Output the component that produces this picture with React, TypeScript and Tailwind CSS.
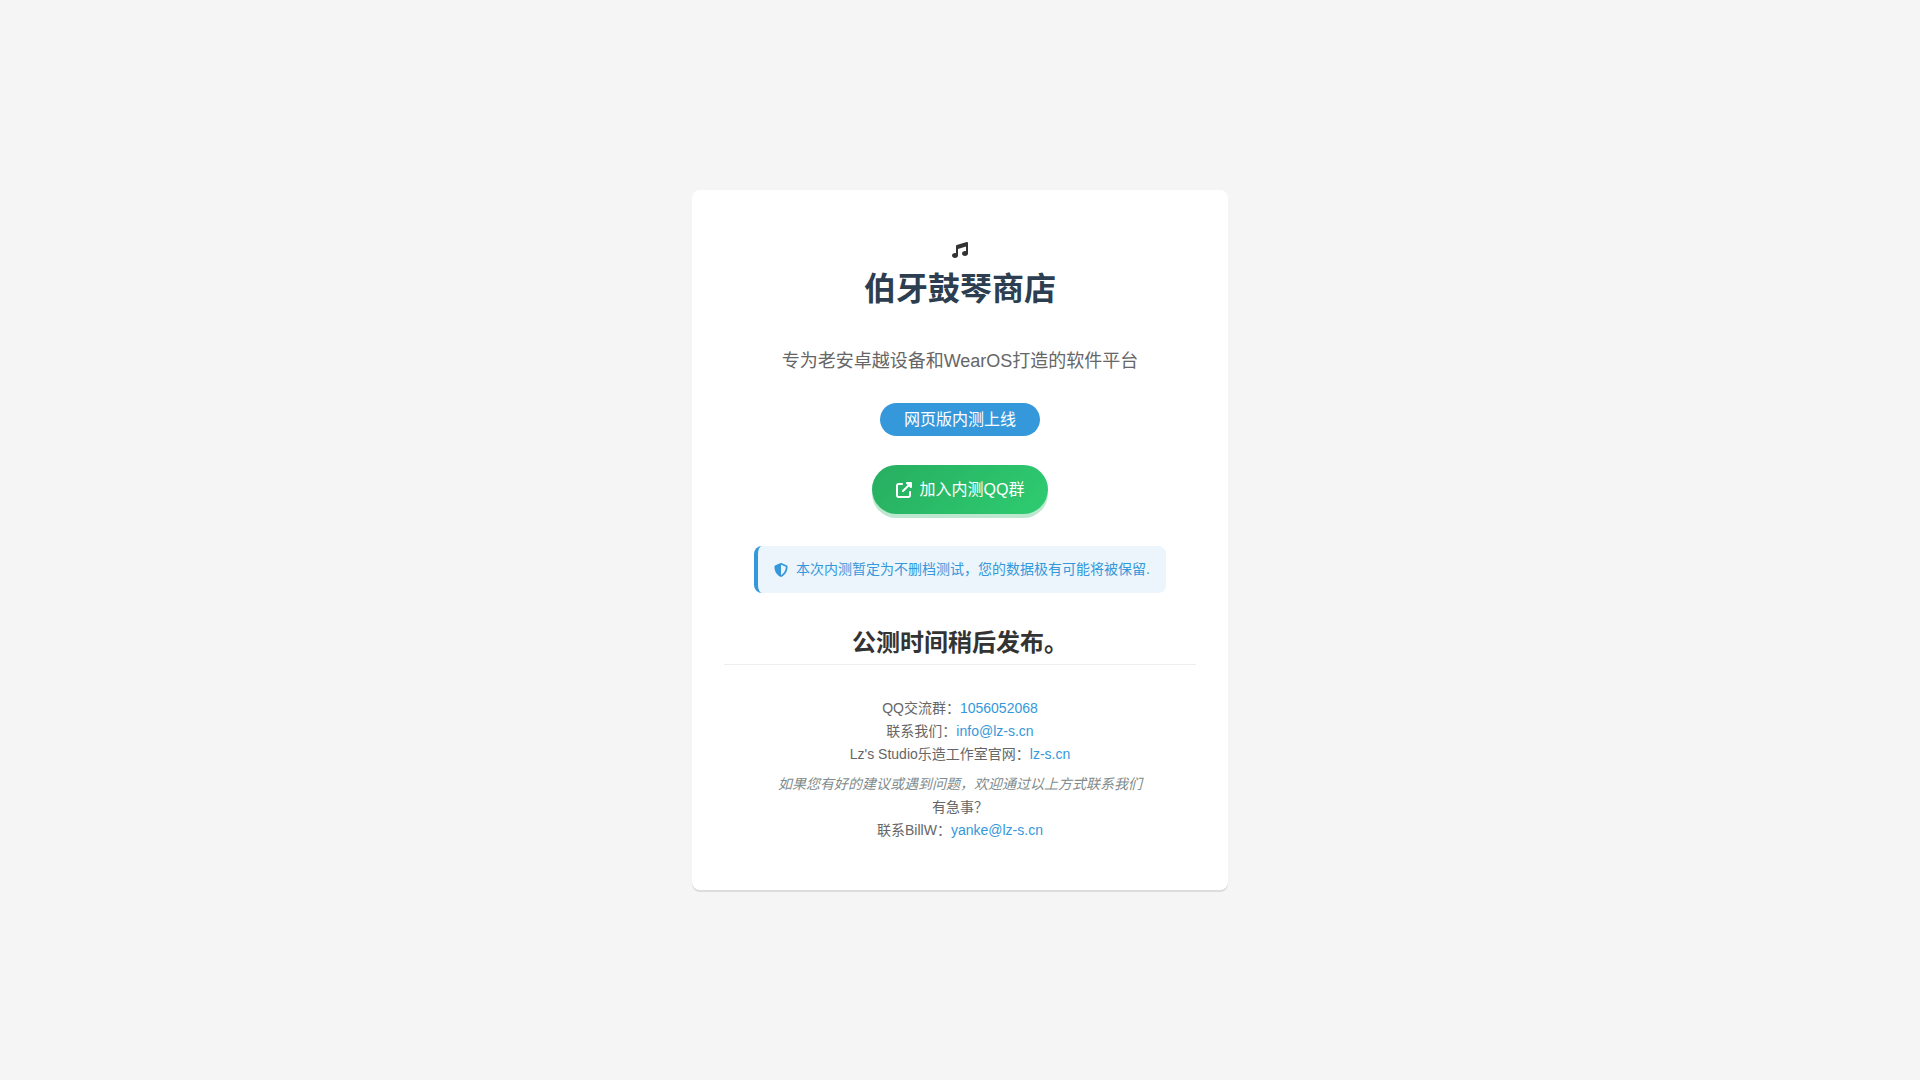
import { ReactNode } from 'react';
import { FaMusic, FaShieldHalved, FaUpRightFromSquare } from 'react-icons/fa6';

type TextLinkProps = {
  href: string;
  children: ReactNode;
};

const TextLink = ({ href, children }: TextLinkProps) => (
  <a className="text-[#3498db] hover:underline" href={href}>{children}</a>
);

const Notice = ({ children }: { children: ReactNode }) => (
  <div className="flex items-center gap-2 mx-[30px] mt-8 px-4 py-3 rounded-lg border-l-4 border-[#3498db] bg-[#ebf5fb] text-sm leading-[23px] text-[#3498db]">
    <FaShieldHalved className="size-3.5 shrink-0" />
    <span>{children}</span>
  </div>
);

export default function App() {
  return (
    <div className="flex min-h-screen items-center justify-center bg-[#f5f5f5] text-[#333] font-['Liberation_Sans','Noto_Sans_CJK_SC',sans-serif]">
      <main className="flex flex-col items-center px-8 py-12 rounded-lg bg-white text-center shadow-[0_2px_0_rgba(0,0,0,0.1)]">
        <FaMusic className="size-4 mt-1 mb-[5px]" />
        <h1 className="text-[32px] leading-[52px] font-bold text-[#2c3e50]">伯牙鼓琴商店</h1>
        <p className="mt-8 text-lg leading-7 text-[#666]">专为老安卓越设备和WearOS打造的软件平台</p>

        <span className="mt-7 px-6 py-1 rounded-full bg-[#3498db] leading-[25px] text-white">网页版内测上线</span>

        <a
          className="inline-flex items-center gap-2 mt-[29px] px-6 py-3 rounded-full bg-linear-135 from-[#27ae60] to-[#2ecc71] leading-[25px] text-white shadow-[0_4px_0_rgba(39,174,96,0.3)]"
          href="#join"
        >
          <FaUpRightFromSquare className="size-4" /> 加入内测QQ群
        </a>

        <Notice>本次内测暂定为不删档测试，您的数据极有可能将被保留.</Notice>

        <h2 className="w-full mt-8 pb-[3px] border-b border-[#eee] text-2xl leading-9 font-bold">公测时间稍后发布。</h2>

        <footer className="mt-8 text-sm leading-[23px] text-[#666]">
          <p>QQ交流群：<TextLink href="#group">1056052068</TextLink></p>
          <p>联系我们：<TextLink href="mailto:info@lz-s.cn">info@lz-s.cn</TextLink></p>
          <p>Lz's Studio乐造工作室官网：<TextLink href="https://lz-s.cn">lz-s.cn</TextLink></p>
          <p className="mt-[7px] italic text-[#7f8c8d]">如果您有好的建议或遇到问题，欢迎通过以上方式联系我们</p>
          <p>有急事？</p>
          <p>联系BillW：<TextLink href="mailto:yanke@lz-s.cn">yanke@lz-s.cn</TextLink></p>
        </footer>
      </main>
    </div>
  );
}
